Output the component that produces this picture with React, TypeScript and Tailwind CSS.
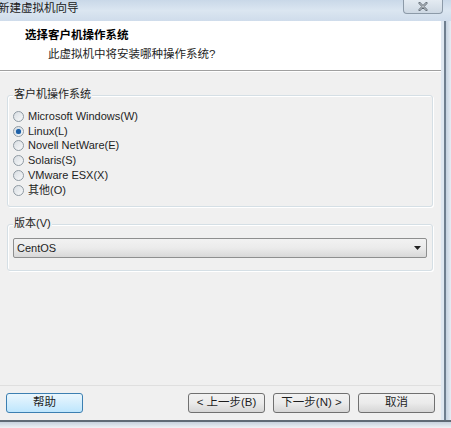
import React from "react"

const font = "font-['Liberation_Sans','Noto_Sans_CJK_SC',sans-serif]"

const systems = [
  "Microsoft Windows(W)",
  "Linux(L)",
  "Novell NetWare(E)",
  "Solaris(S)",
  "VMware ESX(X)",
  "其他(O)",
]

const Radio = ({ label, checked }: { label: string; checked?: boolean }) => (
  <div className="flex items-center h-[14.8px]">
    <span className="w-[11px] h-[11px] rounded-full border border-[#8f9aa3] bg-gradient-to-br from-[#d8dde2] to-[#f8f9fa] flex items-center justify-center">
      {checked && (
        <span className="w-[5px] h-[5px] rounded-full bg-[#1d5fa6] shadow-[0_0_1px_#3c8fd6]" />
      )}
    </span>
    <span className="ml-[4px] text-[11px] text-[#1e1e1e] leading-none">{label}</span>
  </div>
)

const Button = ({ children, primary }: { children: React.ReactNode; primary?: boolean }) => (
  <div
    className={`w-[77px] h-[20px] rounded-[3px] border flex items-center justify-center text-[11.5px] text-[#1e1e1e] ${
      primary
        ? "border-[#3c7fb1] bg-gradient-to-b from-[#eaf6fd] to-[#bee6fd]"
        : "border-[#707070] bg-gradient-to-b from-[#f2f2f2] via-[#ebebeb] to-[#d6d6d6]"
    }`}
  >
    {children}
  </div>
)

export default function App() {
  return (
    <div className={`w-[451px] h-[428px] overflow-hidden flex flex-col bg-[#d6e2ee] ${font}`}>
      {/* title bar */}
      <div className="h-[21px] flex items-start justify-between bg-gradient-to-b from-[#c9d8e8] via-[#dbe6f1] to-[#cfdceb]">
        <span className="ml-[-2px] mt-[3px] text-[11.5px] leading-none text-[#202020]">新建虚拟机向导</span>
        <div className="mr-[8px] w-[40px] h-[14px] rounded-b-[4px] border border-t-0 border-[#8c9aa8] bg-gradient-to-b from-[#e4ebf2] to-[#cdd8e3] flex items-center justify-center">
          <svg width="10" height="9" viewBox="0 0 10 9">
            <path d="M1.5 1 L8.5 8 M8.5 1 L1.5 8" stroke="#5a6570" strokeWidth="2.2" strokeLinecap="round" />
            <path d="M1.5 1 L8.5 8 M8.5 1 L1.5 8" stroke="#f4f6f8" strokeWidth="0.8" strokeLinecap="round" />
          </svg>
        </div>
      </div>

      <div className="flex flex-1">
        {/* content */}
        <div className="w-[441px] flex flex-col bg-[#f0f0f0]">
          <div className="h-[50px] bg-white border-b border-[#a0a0a0] pt-[9px]">
            <div className="ml-[25px] text-[11.5px] font-bold leading-none text-[#000]">选择客户机操作系统</div>
            <div className="ml-[48px] mt-[7px] text-[11.5px] leading-none text-[#1e1e1e]">此虚拟机中将安装哪种操作系统?</div>
          </div>
          <div className="h-px bg-white" />

          <div className="flex-1 flex flex-col px-[7px] pr-[8px]">
            {/* group 1 */}
            <div className="mt-[23px] relative border border-[#d5dfe5] rounded-[3px] h-[112px] shadow-[inset_1px_1px_0_#fff,1px_1px_0_#fff]">
              <span className="absolute -top-[7px] left-[5px] px-[1px] bg-[#f0f0f0] text-[11px] leading-none text-[#1e1e1e]">客户机操作系统</span>
              <div className="ml-[5px] mt-[13px] flex flex-col">
                {systems.map(s => (
                  <Radio key={s} label={s} checked={s === "Linux(L)"} />
                ))}
              </div>
            </div>

            {/* group 2 */}
            <div className="mt-[17px] relative border border-[#d5dfe5] rounded-[3px] h-[47px] shadow-[inset_1px_1px_0_#fff,1px_1px_0_#fff]">
              <span className="absolute -top-[7px] left-[5px] px-[1px] bg-[#f0f0f0] text-[11px] leading-none text-[#1e1e1e]">版本(V)</span>
              <div className="ml-[5px] mr-[5px] mt-[13px] h-[20px] rounded-[2px] border border-[#8e8f8f] bg-gradient-to-b from-[#f2f2f2] via-[#ebebeb] to-[#d8d8d8] flex items-center justify-between px-[3px]">
                <span className="text-[11px] leading-none text-[#1e1e1e]">CentOS</span>
                <svg width="7" height="4" viewBox="0 0 7 4" className="mr-[2px]">
                  <path d="M0 0 H7 L3.5 4 Z" fill="#222" />
                </svg>
              </div>
            </div>
          </div>

          {/* footer */}
          <div className="border-t border-[#dfdfdf] h-[35px] flex items-center px-[6px]">
            <Button primary>帮助</Button>
            <div className="flex-1" />
            <Button>&lt; 上一步(B)</Button>
            <div className="w-[8px]" />
            <Button>下一步(N) &gt;</Button>
            <div className="w-[8px]" />
            <Button>取消</Button>
          </div>
        </div>
        {/* right frame */}
        <div className="flex-1 flex">
          <div className="w-[3px] bg-[#dfe8f1]" />
          <div className="w-[2px] bg-[#6f7f8f]" />
          <div className="flex-1 bg-gradient-to-r from-[#c4d2e0] to-[#e6edf4]" />
        </div>
      </div>

      {/* bottom frame */}
      <div className="h-[8px] flex flex-col">
        <div className="h-[2px] bg-[#5e6a76]" />
        <div className="flex-1 bg-gradient-to-b from-[#c6d2de] to-[#eef2f6]" />
      </div>
    </div>
  )
}
